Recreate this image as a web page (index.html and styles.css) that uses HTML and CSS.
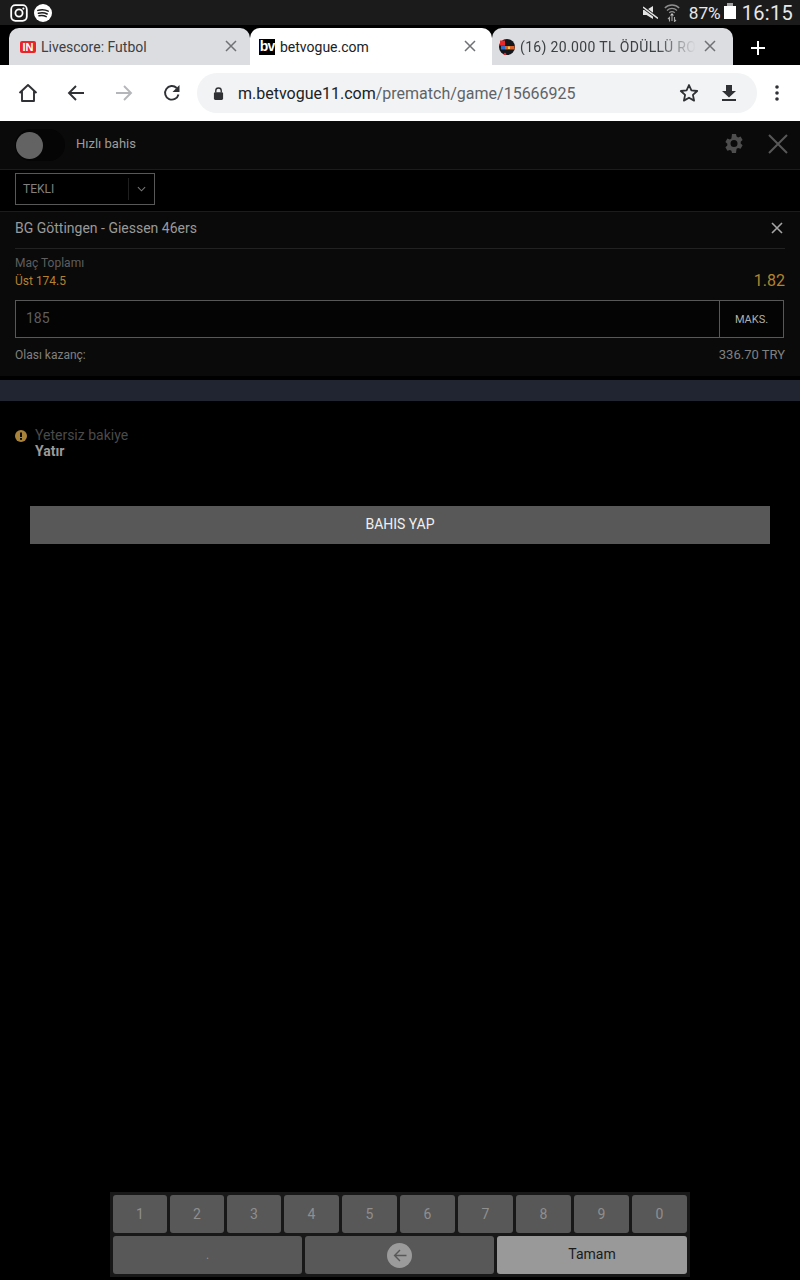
FILE: index.html
```html
<!DOCTYPE html>
<html lang="tr">
<head>
<meta charset="utf-8">
<title>betvogue.com</title>
<link rel="stylesheet" href="styles.css">
</head>
<body>
<div class="screen">
  <div class="status">
    <div class="status-left">
      <svg class="st-icon" viewBox="0 0 18 18"><rect x="1.2" y="1.2" width="15.6" height="15.6" rx="4.2" fill="none" stroke="#fff" stroke-width="1.8"/><circle cx="9" cy="9" r="3.6" fill="none" stroke="#fff" stroke-width="1.8"/><circle cx="13.4" cy="4.6" r="1.1" fill="#fff"/></svg>
      <svg class="st-icon" viewBox="0 0 18 18"><circle cx="9" cy="9" r="9" fill="#fff"/><path d="M3.8 6.4c3.6-1 7.4-.8 10.4.8M4.4 9.2c3-.8 6.2-.6 8.8.8M5 11.8c2.4-.6 5-.4 7.2.8" fill="none" stroke="#1b1b1b" stroke-width="1.5" stroke-linecap="round"/></svg>
    </div>
    <div class="status-right">
      <svg class="st-mute" viewBox="0 0 15 13"><path d="M0 4h3.500L10 0v13L3.500 9H0z" fill="#e4e4e4"/><path d="M0 1l15 11.500" stroke="#1b1b1b" stroke-width="3"/><path d="M0 1l15 11.500" stroke="#e4e4e4" stroke-width="1.400"/></svg>
      <svg class="st-wifi" viewBox="0 0 16 19"><path d="M.8 5C4.800 1 11.200 1 15.200 5M3 7.400c2.800-2.600 7.200-2.600 10 0M5.200 9.800c1.600-1.400 4-1.400 5.600 0" fill="none" stroke="#8e8e8e" stroke-width="1.300"/><path d="M8 10l2 2.500H6z" fill="#c8c8c8"/><path d="M5.500 18.500v-4l-1.500 1.500M10.500 14v4.500l1.500-1.500M8 12v6" fill="none" stroke="#a8a8a8" stroke-width="1.100"/></svg>
      <span class="st-pct">87%</span>
      <span class="st-batt"></span>
      <span class="st-time">16:15</span>
    </div>
  </div>

  <div class="tabs">
    <div class="tab tab-off tab-first">
      <span class="fav fav-in">IN</span>
      <span class="tab-title">Livescore: Futbol</span>
      <svg class="tab-x" viewBox="0 0 12 12"><path d="M1 1l10 10M11 1L1 11"/></svg>
    </div>
    <div class="tab tab-on">
      <span class="fav fav-bv">bv</span>
      <span class="tab-title">betvogue.com</span>
      <svg class="tab-x" viewBox="0 0 12 12"><path d="M1 1l10 10M11 1L1 11"/></svg>
    </div>
    <div class="tab tab-off tab-third">
      <svg class="fav" viewBox="0 0 16 16"><circle cx="8" cy="8" r="8" fill="#15151c"/><rect x="1" y="1.500" width="5" height="5" fill="#e8282a"/><rect x="2" y="6.500" width="4" height="4" fill="#2f6fd0"/><rect x="6" y="7" width="9.500" height="3.500" fill="#d9622a"/><rect x="9" y="7.500" width="2" height="2.500" fill="#f2c84a"/><circle cx="6" cy="15" r="1.300" fill="#d8242a"/></svg>
      <span class="tab-title tab-fade">(16) 20.000 TL ÖDÜLLÜ ROL</span>
      <svg class="tab-x" viewBox="0 0 12 12"><path d="M1 1l10 10M11 1L1 11"/></svg>
    </div>
    <svg class="tab-new" viewBox="0 0 14 14"><path d="M7 0v14M0 7h14"/></svg>
  </div>

  <div class="toolbar">
    <svg class="tb tb-home" viewBox="0 0 20 20"><path d="M1.500 10L10 2l8.500 8M4 8v10h12V8" fill="none" stroke="#303134" stroke-width="1.900" stroke-linejoin="round"/></svg>
    <svg class="tb tb-back" viewBox="0 0 18 18"><path d="M17 9H2M9 2L2 9l7 7" fill="none" stroke="#303134" stroke-width="1.900"/></svg>
    <svg class="tb tb-fwd" viewBox="0 0 18 18"><path d="M1 9h15M9 2l7 7-7 7" fill="none" stroke="#b5b6b9" stroke-width="1.900"/></svg>
    <svg class="tb tb-reload" viewBox="0 0 18 18"><path d="M15.500 10.500A6.800 6.800 0 1 1 13.700 4" fill="none" stroke="#303134" stroke-width="1.900"/><path d="M16.500 1v7h-7z" fill="#303134"/></svg>
    <div class="omni">
      <svg class="lock" viewBox="0 0 12 14"><path d="M3 6V4a3 3 0 0 1 6 0v2" fill="none" stroke="#303134" stroke-width="1.500"/><rect x="1" y="5.500" width="10" height="8.500" rx="1.500" fill="#303134"/></svg>
      <span class="url"><span class="url-host">m.betvogue11.com</span>/prematch/game/15666925</span>
      <svg class="star" viewBox="0 0 20 20"><path d="M10 2l2.400 5.400 5.800.6-4.300 3.900 1.200 5.700L10 14.700l-5.100 2.900 1.200-5.700L1.800 8l5.800-.6z" fill="none" stroke="#303134" stroke-width="1.800" stroke-linejoin="round"/></svg>
      <svg class="dl" viewBox="0 0 14 16"><path d="M4 0h6v6h4l-7 6.500L0 6h4z" fill="#303134"/><rect y="14" width="14" height="2" fill="#303134"/></svg>
    </div>
    <svg class="tb-menu" viewBox="0 0 4 16"><circle cx="2" cy="2" r="1.800"/><circle cx="2" cy="8" r="1.800"/><circle cx="2" cy="14" r="1.800"/></svg>
  </div>

  <div class="page">
    <div class="bar-top">
      <div class="toggle"><span class="knob"></span></div>
      <span class="toggle-label">Hızlı bahis</span>
      <svg class="gear" viewBox="0 0 18 19"><path fill-rule="evenodd" d="M7 0h4l.6 2.600 1.500.8 2.500-.8 2 3.400-1.900 1.800v1.700l1.900 1.800-2 3.400-2.500-.8-1.500.8L11 19H7l-.6-2.300-1.500-.8-2.500.8-2-3.400 1.900-1.800V9.800L.4 8l2-3.400 2.500.8 1.500-.8zM9 6a3.500 3.500 0 1 0 0 7 3.500 3.500 0 0 0 0-7z"/></svg>
      <svg class="close-lg" viewBox="0 0 20 20"><path d="M1 1l18 18M19 1L1 19"/></svg>
    </div>
    <div class="bar-select">
      <div class="select">
        <span class="select-text">TEKLI</span>
        <span class="select-caret"><svg viewBox="0 0 10 6"><path d="M1 1l4 4 4-4"/></svg></span>
      </div>
    </div>
    <div class="slip">
      <div class="slip-head">
        <span class="match">BG Göttingen - Giessen 46ers</span>
        <svg class="close-sm" viewBox="0 0 12 12"><path d="M1 1l10 10M11 1L1 11"/></svg>
      </div>
      <div class="market">
        <div class="market-name">Maç Toplamı</div>
        <div class="market-row"><span class="pick">Üst 174.5</span><span class="odd">1.82</span></div>
      </div>
      <div class="stake">
        <span class="stake-value">185</span>
        <span class="stake-max">MAKS.</span>
      </div>
      <div class="win"><span>Olası kazanç:</span><span class="win-value">336.70 TRY</span></div>
    </div>
    <div class="divider"></div>
    <div class="notice">
      <svg class="warn" viewBox="0 0 12 12"><circle cx="6" cy="6" r="6" fill="#a9823a"/><rect x="5" y="2.500" width="2" height="4.500" fill="#0a0a0a"/><rect x="5" y="8" width="2" height="1.800" fill="#0a0a0a"/></svg>
      <div class="notice-text">
        <div class="notice-title">Yetersiz bakiye</div>
        <div class="notice-link">Yatır</div>
      </div>
    </div>
    <div class="bet-btn">BAHIS YAP</div>
    <div class="keypad">
      <div class="row-digits">
        <span class="key">1</span><span class="key">2</span><span class="key">3</span><span class="key">4</span><span class="key">5</span><span class="key">6</span><span class="key">7</span><span class="key">8</span><span class="key">9</span><span class="key">0</span>
      </div>
      <div class="row-actions">
        <span class="key key-dot">.</span>
        <span class="key"><span class="bksp"><svg viewBox="0 0 14 12"><path d="M13 6H2M7 1L2 6l5 5"/></svg></span></span>
        <span class="key key-ok">Tamam</span>
      </div>
    </div>
  </div>
</div>
</body>
</html>
```
FILE: styles.css
```css
* { box-sizing: border-box; }
html, body { margin: 0; padding: 0; background: #000; }
body { font-family: Roboto, "Liberation Sans", sans-serif; }
.screen { width: 800px; height: 1280px; display: flex; flex-direction: column; overflow: hidden; }

/* Android status bar */
.status { height: 25px; flex: none; background: #1b1b1b; display: flex; justify-content: space-between; align-items: center; padding: 0 7px 0 10px; color: #e8e8e8; }
.status-left { display: flex; gap: 6px; }
.st-icon { width: 18px; height: 18px; display: block; }
.status-right { display: flex; align-items: center; }
.st-mute { width: 15px; height: 13px; margin-right: 6px; }
.st-wifi { width: 16px; height: 19px; margin-right: 9px; }
.st-pct { font: 17.2px "Roboto", sans-serif; margin-right: 3px; }
.st-batt { width: 12px; height: 13px; background: #fff; margin-right: 6px; position: relative; }
.st-batt::before { content: ""; position: absolute; top: -3px; left: 3px; width: 6px; height: 3px; background: #a0a0a0; }
.st-time { font: 20px "Roboto", sans-serif; letter-spacing: .3px; }

/* Chrome tabs */
.tabs { height: 40px; flex: none; background: #000; display: flex; padding: 3px 0 0 9px; position: relative; }
.tab { width: 241px; height: 37px; display: flex; align-items: center; border-radius: 10px 10px 0 0; padding: 0 13px 0 11px; }
.tab-off { background: #dcdde1; }
.tab-on { background: #fff; width: 242px; padding-left: 9px; padding-right: 16px; }
.tab-third { padding-left: 7px; padding-right: 17px; }
.fav { width: 16px; height: 16px; flex: none; margin-right: 5px; display: block; }
.fav-in { height: 12px; background: #e8262a; color: #fff; font: 900 11px/12px "Liberation Sans", sans-serif; text-align: center; border-radius: 2px; }
.fav-bv { background: #000; color: #fff; font: 700 14px/14px "Liberation Sans", sans-serif; text-align: center; letter-spacing: -1px; }
.tab-title { flex: 1; min-width: 0; font-size: 14px; color: #3c4043; white-space: nowrap; }
.tab-on .tab-title { color: #202124; }
.tab-fade { letter-spacing: .35px; -webkit-mask-image: linear-gradient(90deg, #000 78%, transparent 100%); mask-image: linear-gradient(90deg, #000 78%, transparent 100%); }
.tab-x { width: 12px; height: 12px; flex: none; fill: none; stroke: #6f7175; stroke-width: 1.500; margin: 0 0 1px 8px; }
.tab-new { width: 14px; height: 14px; margin: 13px 0 0 18px; fill: none; stroke: #fff; stroke-width: 2; }

/* Chrome toolbar */
.toolbar { height: 56px; flex: none; background: #fff; display: flex; align-items: center; padding-left: 18px; }
.tb { display: block; flex: none; }
.tb-home { width: 20px; height: 20px; margin-right: 29px; }
.tb-back { width: 18px; height: 18px; margin-right: 30px; }
.tb-fwd { width: 18px; height: 18px; margin-right: 30px; }
.tb-reload { width: 18px; height: 18px; margin-right: 16px; }
.omni { width: 560px; height: 40px; border-radius: 20px; background: #f1f3f4; display: flex; align-items: center; padding: 0 21px 0 16px; }
.lock { width: 11px; height: 13px; margin-right: 14px; flex: none; }
.url { flex: 1; font-size: 16px; color: #5f6368; white-space: nowrap; }
.url-host { color: #202124; }
.star { width: 20px; height: 20px; margin-right: 23px; flex: none; }
.dl { width: 14px; height: 16px; flex: none; }
.tb-menu { width: 4px; height: 16px; margin-left: 18px; fill: #303134; }

/* Page */
.page { flex: 1; background: #000; display: flex; flex-direction: column; min-height: 0; }
.bar-top { height: 49px; flex: none; background: #0a0a0a; border-bottom: 1px solid #1c1c1c; display: flex; align-items: center; padding: 0 12px 3px 15px; }
.toggle { width: 50px; height: 32px; margin-top: 2px; border-radius: 16px; background: #050505; padding: 3px 1px; flex: none; }
.knob { display: block; width: 27px; height: 27px; border-radius: 50%; background: #636363; }
.toggle-label { font-size: 13px; color: #9d9d9d; margin-left: 11px; flex: 1; }
.gear { width: 18px; height: 19px; fill: #4d4d4d; margin-right: 25px; }
.close-lg { width: 20px; height: 20px; fill: none; stroke: #585858; stroke-width: 2; }
.bar-select { height: 42px; flex: none; background: #000; border-bottom: 1px solid #1c1c1c; padding-top: 3px; padding-left: 15px; }
.select { width: 140px; height: 32px; border: 1px solid #585858; display: flex; align-items: center; padding-left: 7px; }
.select-text { flex: 1; font-size: 12px; color: #808080; }
.select-caret { width: 26px; height: 22px; border-left: 1px solid #1f1f1f; display: flex; align-items: center; justify-content: center; }
.select-caret svg { width: 9px; height: 6px; fill: none; stroke: #777; stroke-width: 1.200; }

.slip { height: 164px; flex: none; background: #0a0a0a; padding: 0 15px; }
.slip-head { height: 37px; border-bottom: 1px solid #222; padding-bottom: 5px; display: flex; align-items: center; justify-content: space-between; }
.match { font-size: 14px; color: #9a9a9a; }
.close-sm { width: 12px; height: 12px; fill: none; stroke: #a5a5a5; stroke-width: 1.600; margin-right: 2px; }
.market { padding-top: 7px; }
.market-name { font-size: 12px; line-height: 14px; color: #5e5e5e; }
.market-row { display: flex; justify-content: space-between; align-items: flex-end; height: 18px; margin-top: 2px; }
.pick { font-size: 12px; line-height: 18px; color: #b3832f; }
.odd { font-size: 16px; line-height: 18px; color: #b3832f; }
.stake { height: 38px; margin-top: 10px; width: 769px; border: 1px solid #585858; display: flex; align-items: center; background: #040404; }
.stake-value { flex: 1; padding: 0 0 2px 10px; font-size: 14px; color: #5e5e5e; }
.stake-max { width: 64px; height: 100%; border-left: 1px solid #585858; font-size: 11px; color: #b0b0b0; display: flex; align-items: center; justify-content: center; }
.win { display: flex; justify-content: space-between; align-items: center; font-size: 12px; line-height: 14px; color: #808080; margin-top: 10px; }
.win-value { font-size: 13px; }

.divider { height: 21px; flex: none; margin-top: 4px; background: #212531; }
.notice { display: flex; flex: none; padding: 26px 0 0 15px; }
.warn { width: 12px; height: 12px; margin-top: 3px; flex: none; }
.notice-text { margin-left: 8px; }
.notice-title { font-size: 14px; line-height: 16px; color: #4a4a4a; }
.notice-link { font-size: 14px; line-height: 16px; font-weight: 700; color: #9a9a9a; }
.bet-btn { height: 38px; flex: none; margin: 47px 30px 0; padding-bottom: 2px; background: #585858; color: #f0f0f0; font-size: 14px; display: flex; align-items: center; justify-content: center; }

/* Numeric keypad */
.keypad { margin: auto auto 3px; width: 580px; flex: none; background: #181818; padding: 3px; display: flex; flex-direction: column; gap: 3px; }
.row-digits { display: grid; grid-template-columns: repeat(3, 54px) repeat(7, 55px); gap: 3px; }
.row-actions { display: grid; grid-template-columns: 189px 189px 190px; gap: 3px; }
.key { height: 38px; background: #585858; border-radius: 3px; color: #8f8f8f; font-size: 14px; display: flex; align-items: center; justify-content: center; }
.key-dot { font-size: 12px; }
.key-ok { background: #999; color: #1a1a1a; padding-bottom: 2px; }
.bksp { width: 25px; height: 25px; border-radius: 50%; background: #9b9b9b; display: flex; align-items: center; justify-content: center; }
.bksp svg { width: 16px; height: 13px; fill: none; stroke: #585858; stroke-width: 1.300; }
```
